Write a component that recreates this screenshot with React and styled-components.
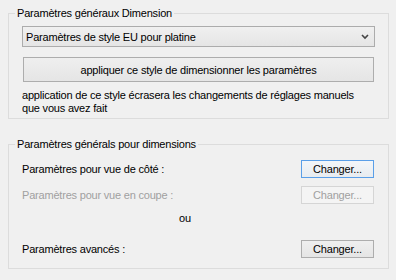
import React from "react";
import styled, { createGlobalStyle } from "styled-components";

const Global = createGlobalStyle`
  html, body { margin: 0; padding: 0; background: #f0f0f0; }
  body { font-family: "Liberation Sans", Arial, sans-serif; font-size: 11px; letter-spacing: -0.2px; color: #000; }
`;

const Page = styled.div`
  width: 396px;
  height: 280px;
  box-sizing: border-box;
  padding: 7px 7px 0 8px;
  display: flex;
  flex-direction: column;
  gap: 19px;
`;

const Group = styled.fieldset`
  margin: 0;
  padding: 0 14px ${p => p.$pb}px 13px;
  border: 1px solid #dcdcdc;
  min-width: 0;
`;

const Legend = styled.legend`
  padding: 0 2px;
  margin-left: -7px;
  line-height: 13px;
  font-size: 11px;
`;

const Stack = styled.div`
  display: flex;
  flex-direction: column;
  padding-top: ${p => p.$pt}px;
`;

const Select = styled.div`
  height: 21px;
  box-sizing: border-box;
  border: 1px solid #acacac;
  background: linear-gradient(#f0f0f0, #e5e5e5);
  display: flex;
  align-items: center;
  justify-content: space-between;
  padding: 0 5px 0 3px;
  margin-right: -1px;
`;

const WideButton = styled.div`
  margin-top: 10px;
  margin-left: 1px;
  height: 25px;
  box-sizing: border-box;
  border: 1px solid #adadad;
  background: linear-gradient(#efefef, #e5e5e5);
  display: flex;
  align-items: center;
  justify-content: center;
`;

const Note = styled.div`
  margin-top: 7px;
  line-height: 13px;
`;

const Row = styled.div`
  display: flex;
  align-items: center;
  justify-content: space-between;
  height: 18px;
  margin-top: ${p => p.$mt}px;
  color: ${p => (p.$disabled ? "#a0a0a0" : "#000")};
`;

const Or = styled.div`
  margin-top: 8px;
  line-height: 13px;
  padding-left: 157px;
`;

const SmallButton = styled.div`
  width: 73px;
  height: 18px;
  box-sizing: border-box;
  display: flex;
  align-items: center;
  justify-content: center;
  border: 1px solid ${p => (p.$focus ? "#5a9fe8" : p.$disabled ? "#d5d5d5" : "#adadad")};
  background: ${p =>
    p.$disabled ? "#f4f4f4" : p.$focus ? "linear-gradient(#f3f6f9, #e8ecf0)" : "linear-gradient(#efefef, #e5e5e5)"};
  color: ${p => (p.$disabled ? "#a0a0a0" : "#000")};
`;

const Chevron = () => (
  <svg width="8" height="6" viewBox="0 0 8 6">
    <polyline points="1,1 4,4 7,1" fill="none" stroke="#444" strokeWidth="1.6" />
  </svg>
);

export default function App() {
  return (
    <>
      <Global />
      <Page>
        <Group $pb={3}>
          <Legend>Paramètres généraux Dimension</Legend>
          <Stack $pt={6}>
            <Select>
              <span>Paramètres de style EU pour platine</span>
              <Chevron />
            </Select>
            <WideButton>appliquer ce style de dimensionner les paramètres</WideButton>
            <Note>
              application de ce style écrasera les changements de réglages manuels
              <br />
              que vous avez fait
            </Note>
          </Stack>
        </Group>
        <Group $pb={10}>
          <Legend>Paramètres générals pour dimensions</Legend>
          <Stack $pt={9}>
            <Row $mt={0}>
              <span>Paramètres pour vue de côté :</span>
              <SmallButton $focus>Changer...</SmallButton>
            </Row>
            <Row $mt={8} $disabled>
              <span>Paramètres pour vue en coupe :</span>
              <SmallButton $disabled>Changer...</SmallButton>
            </Row>
            <Or>ou</Or>
            <Row $mt={15}>
              <span>Paramètres avancés :</span>
              <SmallButton>Changer...</SmallButton>
            </Row>
          </Stack>
        </Group>
      </Page>
    </>
  );
}
